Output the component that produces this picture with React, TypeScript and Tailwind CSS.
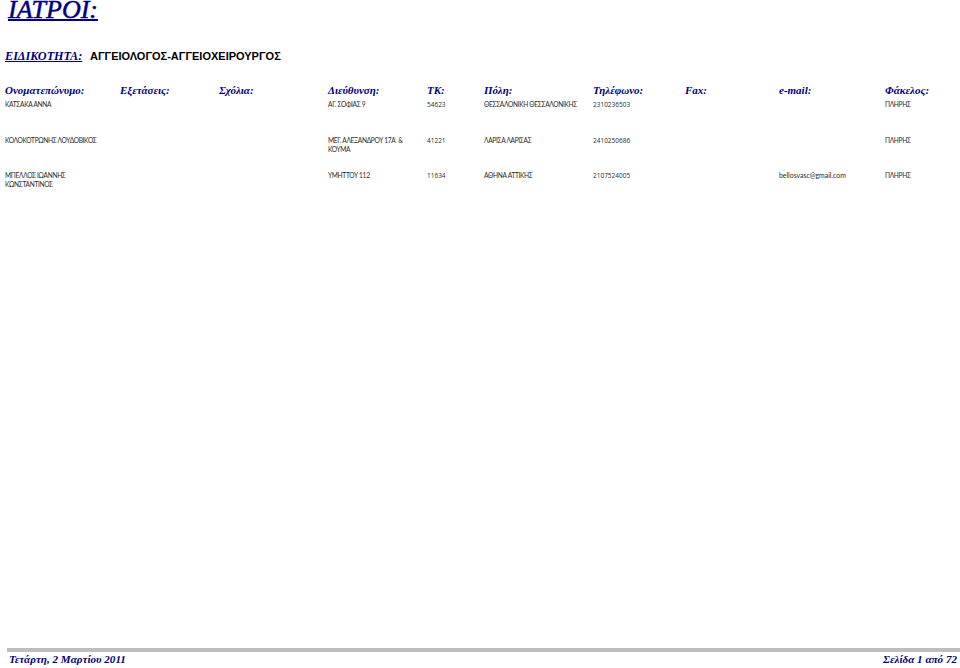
const headers = [
  "Ονοματεπώνυμο:", "Εξετάσεις:", "Σχόλια:", "Διεύθυνση:", "ΤΚ:", "Πόλη:", "Τηλέφωνο:", "Fax:", "e-mail:", "Φάκελος:",
];
const rows = [
  { h: "h-[36px]", cells: ["ΚΑΤΣΑΚΑ ΑΝΝΑ", "", "", "ΑΓ. ΣΟΦΙΑΣ 9", "54623", "ΘΕΣΣΑΛΟΝΙΚΗ ΘΕΣΣΑΛΟΝΙΚΗΣ", "2310236503", "", "", "ΠΛΗΡΗΣ"] },
  { h: "h-[35px]", cells: ["ΚΟΛΟΚΟΤΡΩΝΗΣ ΛΟΥΔΟΒΙΚΟΣ", "", "", "ΜΕΓ. ΑΛΕΞΑΝΔΡΟΥ 17Α  &\nΚΟΥΜΑ", "41221", "ΛΑΡΙΣΑ ΛΑΡΙΣΑΣ", "2410250686", "", "", "ΠΛΗΡΗΣ"] },
  { h: "h-[36px]", cells: ["ΜΠΕΛΛΟΣ ΙΩΑΝΝΗΣ\nΚΩΝΣΤΑΝΤΙΝΟΣ", "", "", "ΥΜΗΤΤΟΥ 112", "11634", "ΑΘΗΝΑ ΑΤΤΙΚΗΣ", "2107524005", "", "bellosvasc@gmail.com", "ΠΛΗΡΗΣ"] },
];
const cols = "grid grid-cols-[115px_99px_109px_99px_57px_109px_92px_94px_106px_75px]";

function cellClass(c: string) {
  if (c.includes("@")) return "text-[6.9px]";
  if (/^\d+$/.test(c)) return "font-['Open_Sans',sans-serif] text-[6.5px]";
  return "text-[6.6px] tracking-[-0.32px]";
}

export default function App() {
  return (
    <div className="flex h-[668px] w-[960px] flex-col overflow-hidden bg-white font-['Liberation_Serif',serif]">
      <div className="h-[22px] pl-2">
        <h1 className="text-[26px] leading-[19px] italic text-[#000080] underline decoration-2 [-webkit-text-stroke:0.5px_#000080]">ΙΑΤΡΟΙ:</h1>
      </div>
      <div className="mt-[24px] flex h-[20px] items-center pl-[5px]">
        <span className="w-[85px] text-[12.2px] font-bold italic text-[#000080] underline">ΕΙΔΙΚΟΤΗΤΑ:</span>
        <span className="font-['Liberation_Sans',sans-serif] text-[11px] font-bold text-black">ΑΓΓΕΙΟΛΟΓΟΣ-ΑΓΓΕΙΟΧΕΙΡΟΥΡΓΟΣ</span>
      </div>
      <div className={`${cols} mt-[16px] h-[16px] pl-[5px] text-[11px] leading-[16px] font-bold italic text-[#000080]`}>
        {headers.map((t) => (
          <div key={t} className="whitespace-nowrap">{t}</div>
        ))}
      </div>
      {rows.map((r, i) => (
        <div key={i} className={`${cols} ${r.h} pl-[5px] pt-[2px] font-['Lato','Open_Sans',sans-serif] leading-[9px] text-[#2a2a2a]`}>
          {r.cells.map((c, j) => (
            <div key={j} className={`whitespace-pre ${cellClass(c)}`}>{c}</div>
          ))}
        </div>
      ))}
      <div className="mt-auto mb-[3px]">
        <div className="ml-[7px] h-[4px] bg-[#bdbdbd]" />
        <div className="mt-[1px] flex h-[12px] items-center justify-between pr-[3px] pl-[9px] text-[11.1px] leading-[12px] font-bold italic text-[#000080]">
          <span>Τετάρτη, 2 Μαρτίου 2011</span>
          <span>Σελίδα 1 από 72</span>
        </div>
      </div>
    </div>
  );
}
